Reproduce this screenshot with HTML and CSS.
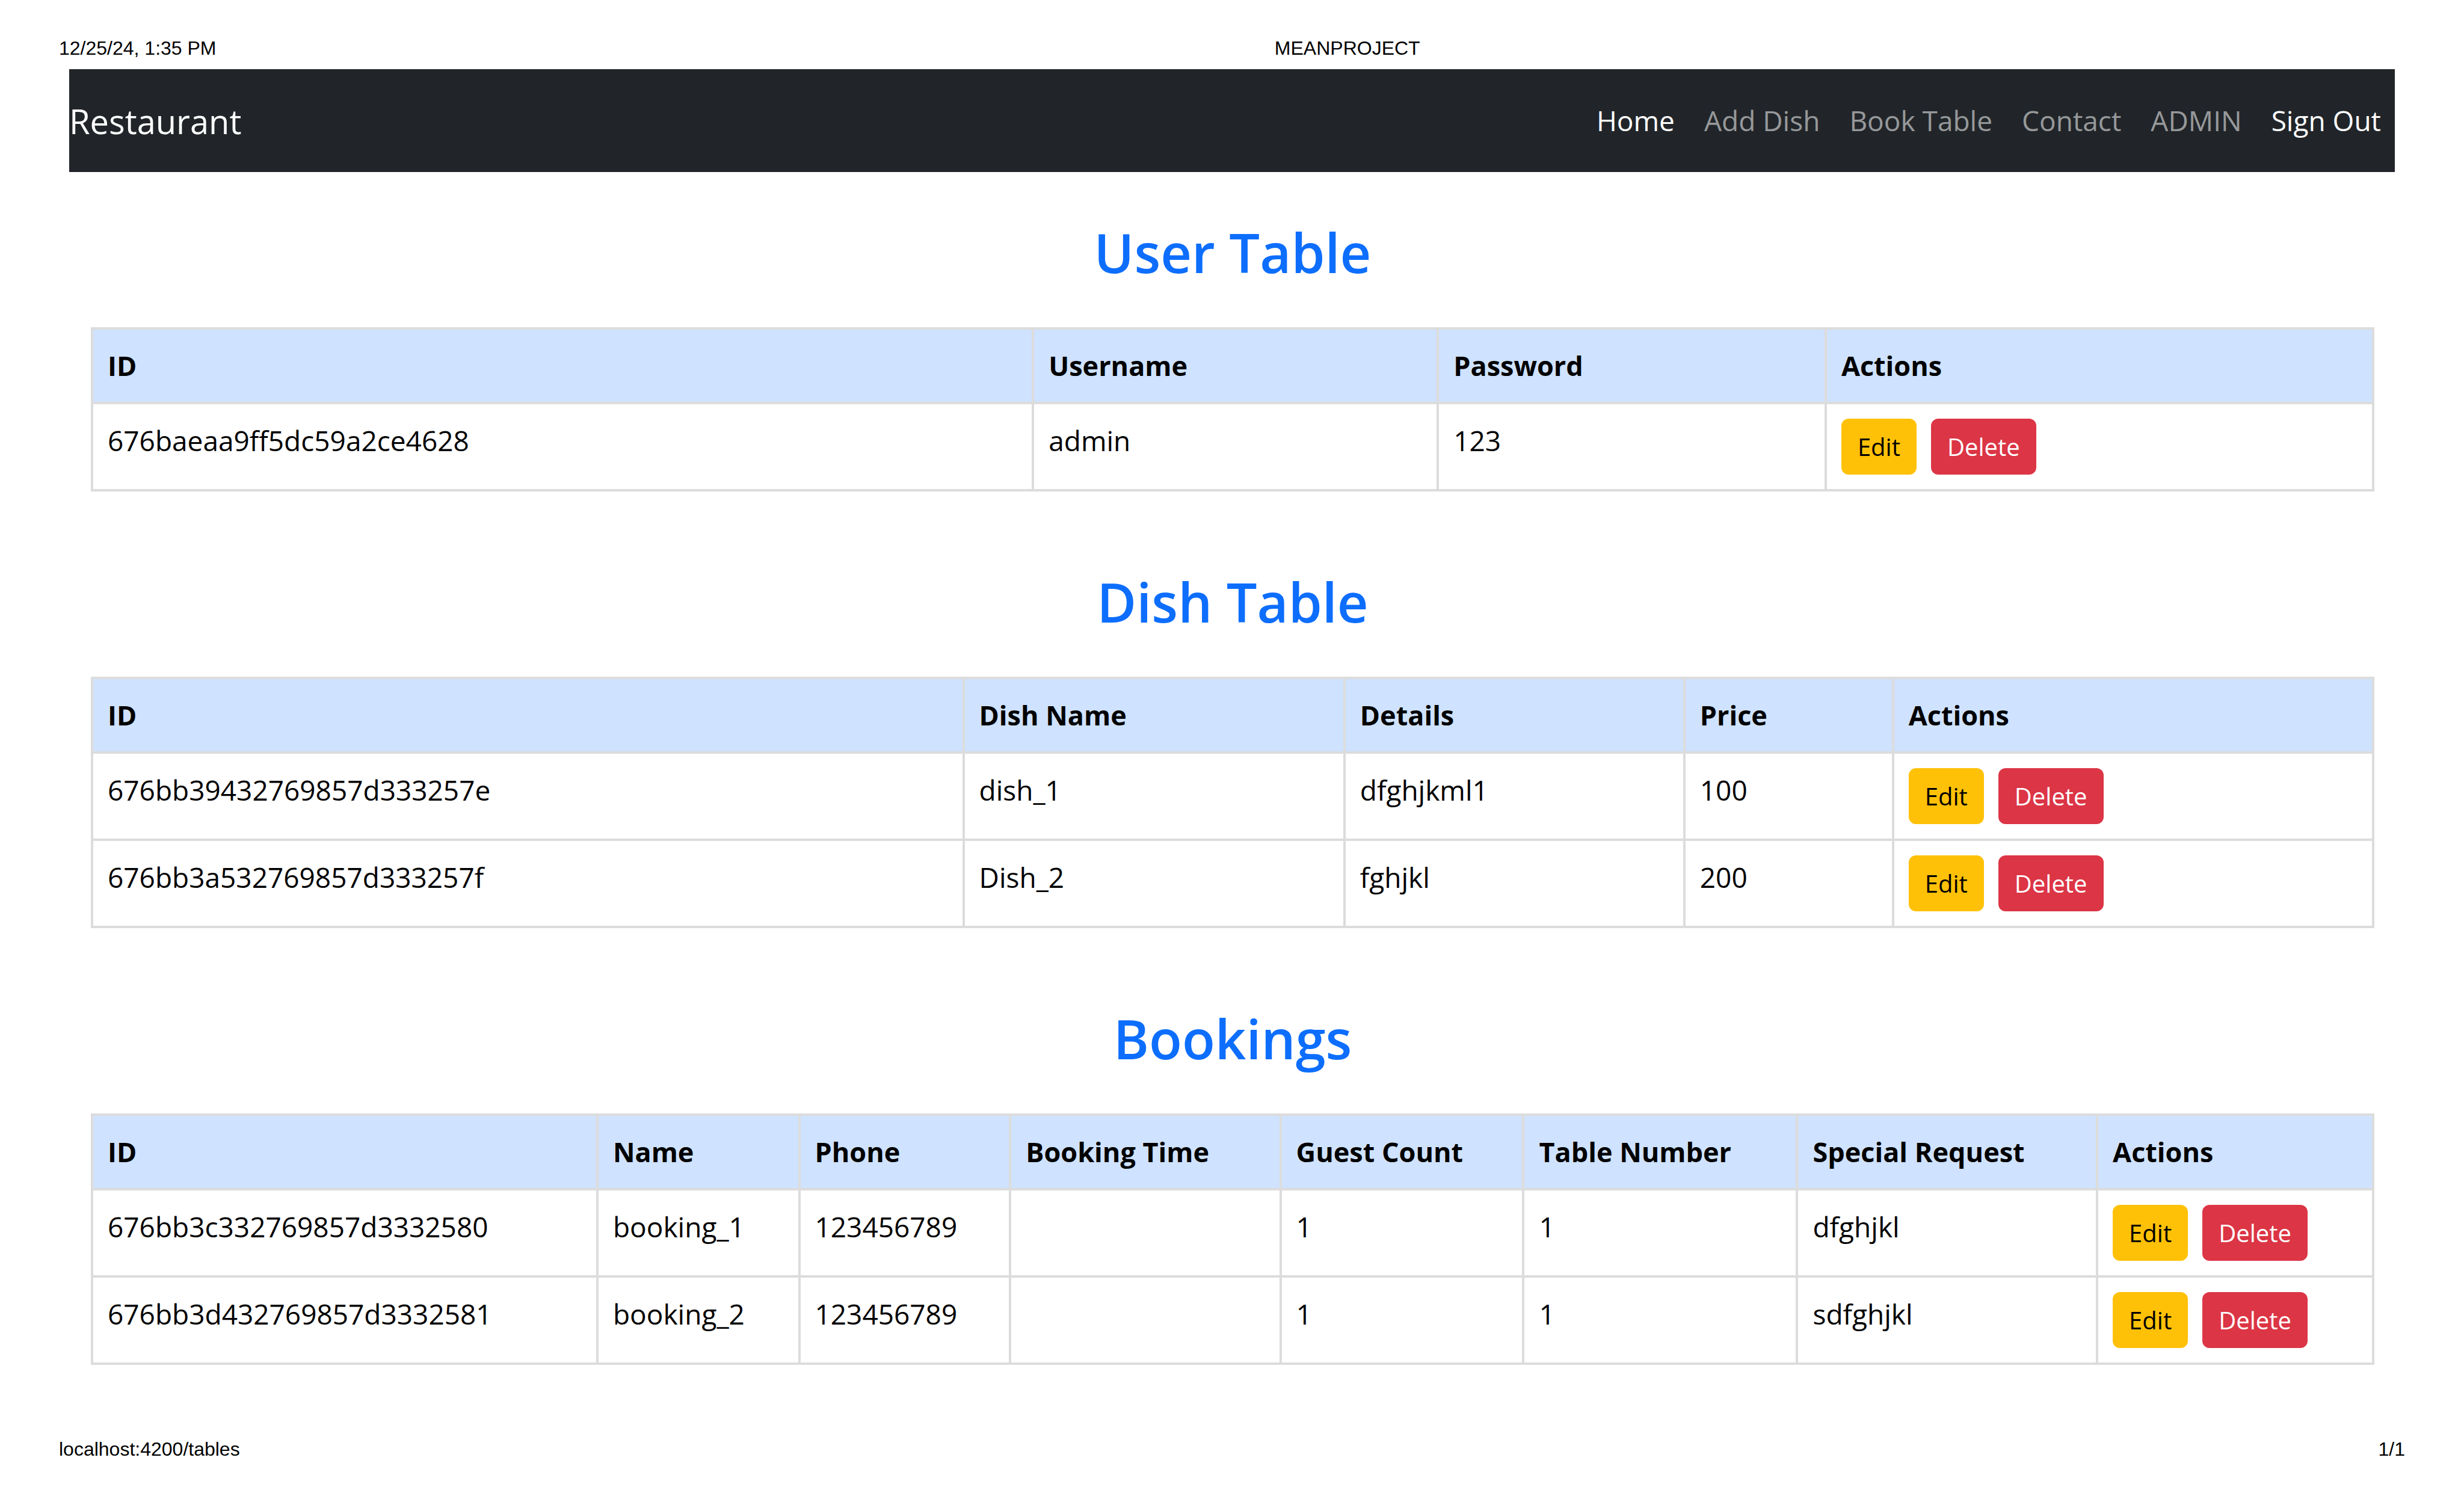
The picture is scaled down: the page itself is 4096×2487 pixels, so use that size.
FILE: index.html
```html
<!DOCTYPE html>
<html lang="en">
<head>
<meta charset="utf-8">
<title>MEANPROJECT</title>
<link rel="stylesheet" href="styles.css">
</head>
<body>
<header class="page-header">
  <span>12/25/24, 1:35 PM</span>
  <span class="page-title">MEANPROJECT</span>
</header>
<div class="app">
  <nav class="navbar">
    <a class="brand" href="#">Restaurant</a>
    <ul class="nav-links">
      <li><a class="nav-link active" href="#">Home</a></li>
      <li><a class="nav-link" href="#">Add Dish</a></li>
      <li><a class="nav-link" href="#">Book Table</a></li>
      <li><a class="nav-link" href="#">Contact</a></li>
      <li><a class="nav-link" href="#">ADMIN</a></li>
      <li><a class="nav-link active" href="#">Sign Out</a></li>
    </ul>
  </nav>
  <main class="content">
    <section class="block">
      <h2 class="heading" id="users">User Table</h2>
      <table class="table user-table" aria-labelledby="users">
        <thead>
          <tr><th scope="col">ID</th><th scope="col">Username</th><th scope="col">Password</th><th scope="col">Actions</th></tr>
        </thead>
        <tbody>
          <tr><td>676baeaa9ff5dc59a2ce4628</td><td>admin</td><td>123</td><td><div class="actions"><button class="btn edit" type="button">Edit</button><button class="btn delete" type="button">Delete</button></div></td></tr>
        </tbody>
      </table>
    </section>
    <section class="block">
      <h2 class="heading" id="dishes">Dish Table</h2>
      <table class="table dish-table" aria-labelledby="dishes">
        <thead>
          <tr><th scope="col">ID</th><th scope="col">Dish Name</th><th scope="col">Details</th><th scope="col">Price</th><th scope="col">Actions</th></tr>
        </thead>
        <tbody>
          <tr><td>676bb39432769857d333257e</td><td>dish_1</td><td>dfghjkml1</td><td>100</td><td><div class="actions"><button class="btn edit" type="button">Edit</button><button class="btn delete" type="button">Delete</button></div></td></tr>
          <tr><td>676bb3a532769857d333257f</td><td>Dish_2</td><td>fghjkl</td><td>200</td><td><div class="actions"><button class="btn edit" type="button">Edit</button><button class="btn delete" type="button">Delete</button></div></td></tr>
        </tbody>
      </table>
    </section>
    <section class="block">
      <h2 class="heading" id="bookings">Bookings</h2>
      <table class="table booking-table" aria-labelledby="bookings">
        <thead>
          <tr><th scope="col">ID</th><th scope="col">Name</th><th scope="col">Phone</th><th scope="col">Booking Time</th><th scope="col">Guest Count</th><th scope="col">Table Number</th><th scope="col">Special Request</th><th scope="col">Actions</th></tr>
        </thead>
        <tbody>
          <tr><td>676bb3c332769857d3332580</td><td>booking_1</td><td>123456789</td><td></td><td>1</td><td>1</td><td>dfghjkl</td><td><div class="actions"><button class="btn edit" type="button">Edit</button><button class="btn delete" type="button">Delete</button></div></td></tr>
          <tr><td>676bb3d432769857d3332581</td><td>booking_2</td><td>123456789</td><td></td><td>1</td><td>1</td><td>sdfghjkl</td><td><div class="actions"><button class="btn edit" type="button">Edit</button><button class="btn delete" type="button">Delete</button></div></td></tr>
        </tbody>
      </table>
    </section>
  </main>
</div>
<footer class="page-footer">
  <span>localhost:4200/tables</span>
  <span>1/1</span>
</footer>
</body>
</html>
```
FILE: styles.css
```css
* {
  box-sizing: border-box;
}

body {
  margin: 0;
  min-height: 100vh;
  display: flex;
  flex-direction: column;
  background: #fff;
  color: #000;
  font-family: "Open Sans", "Noto Sans", sans-serif;
  font-size: 46px;
  line-height: 72px;
}

/* Running header and footer of the printed page */
.page-header,
.page-footer {
  display: flex;
  font-family: "Liberation Sans", Arial, sans-serif;
  font-size: 32px;
  line-height: 40px;
}

.page-header {
  gap: 24px;
  padding: 60px 0 15px 98px;
}

.page-title {
  flex: 1;
  text-align: center;
}

.page-footer {
  justify-content: space-between;
  margin-top: auto;
  padding: 0 98px 58px;
}

.app {
  padding: 0 115px;
}

/* Navigation */
.navbar {
  display: flex;
  align-items: center;
  justify-content: space-between;
  padding: 24px 0;
  background: #212529;
}

.brand {
  color: #fff;
  font-size: 56px;
  line-height: 92px;
  text-decoration: none;
}

.nav-links {
  display: flex;
  gap: 3px;
  margin: 0;
  padding: 0;
  list-style: none;
}

.nav-link {
  display: block;
  padding: 25px 23px 26px;
  color: rgba(255, 255, 255, 0.55);
  text-decoration: none;
}

.nav-link.active {
  color: #fff;
}

/* Sections */
.content {
  display: flex;
  flex-direction: column;
  gap: 124px;
  padding: 74px 34px 0 36px;
}

.heading {
  margin: 0 0 66px;
  color: #0d6efd;
  font-size: 90px;
  font-weight: 600;
  line-height: 118px;
  text-align: center;
}

/* Tables */
.table {
  width: 100%;
  table-layout: fixed;
  border-collapse: collapse;
}

.table th,
.table td {
  padding: 24px;
  border: 4px solid #dcdcdc;
  text-align: left;
  vertical-align: top;
}

.table th {
  background: #cfe2ff;
  font-size: 45px;
  font-weight: 700;
}

.user-table th:nth-child(1) { width: 41.25%; }
.user-table th:nth-child(2) { width: 17.75%; }
.user-table th:nth-child(3) { width: 17%; }

.dish-table th:nth-child(1) { width: 38.2%; }
.dish-table th:nth-child(2) { width: 16.7%; }
.dish-table th:nth-child(3) { width: 14.9%; }
.dish-table th:nth-child(4) { width: 9.15%; }

.booking-table th:nth-child(1) { width: 22.15%; }
.booking-table th:nth-child(2) { width: 8.85%; }
.booking-table th:nth-child(3) { width: 9.25%; }
.booking-table th:nth-child(4) { width: 11.85%; }
.booking-table th:nth-child(5) { width: 10.65%; }
.booking-table th:nth-child(6) { width: 12%; }
.booking-table th:nth-child(7) { width: 13.15%; }

.actions {
  display: flex;
  gap: 24px;
}

.btn {
  padding: 0 27px;
  border: 0;
  border-radius: 12px;
  font: inherit;
  font-size: 40px;
  line-height: 93px;
}

.edit {
  background: #ffc107;
  color: #000;
}

.delete {
  background: #dc3545;
  color: #fff;
}
```
